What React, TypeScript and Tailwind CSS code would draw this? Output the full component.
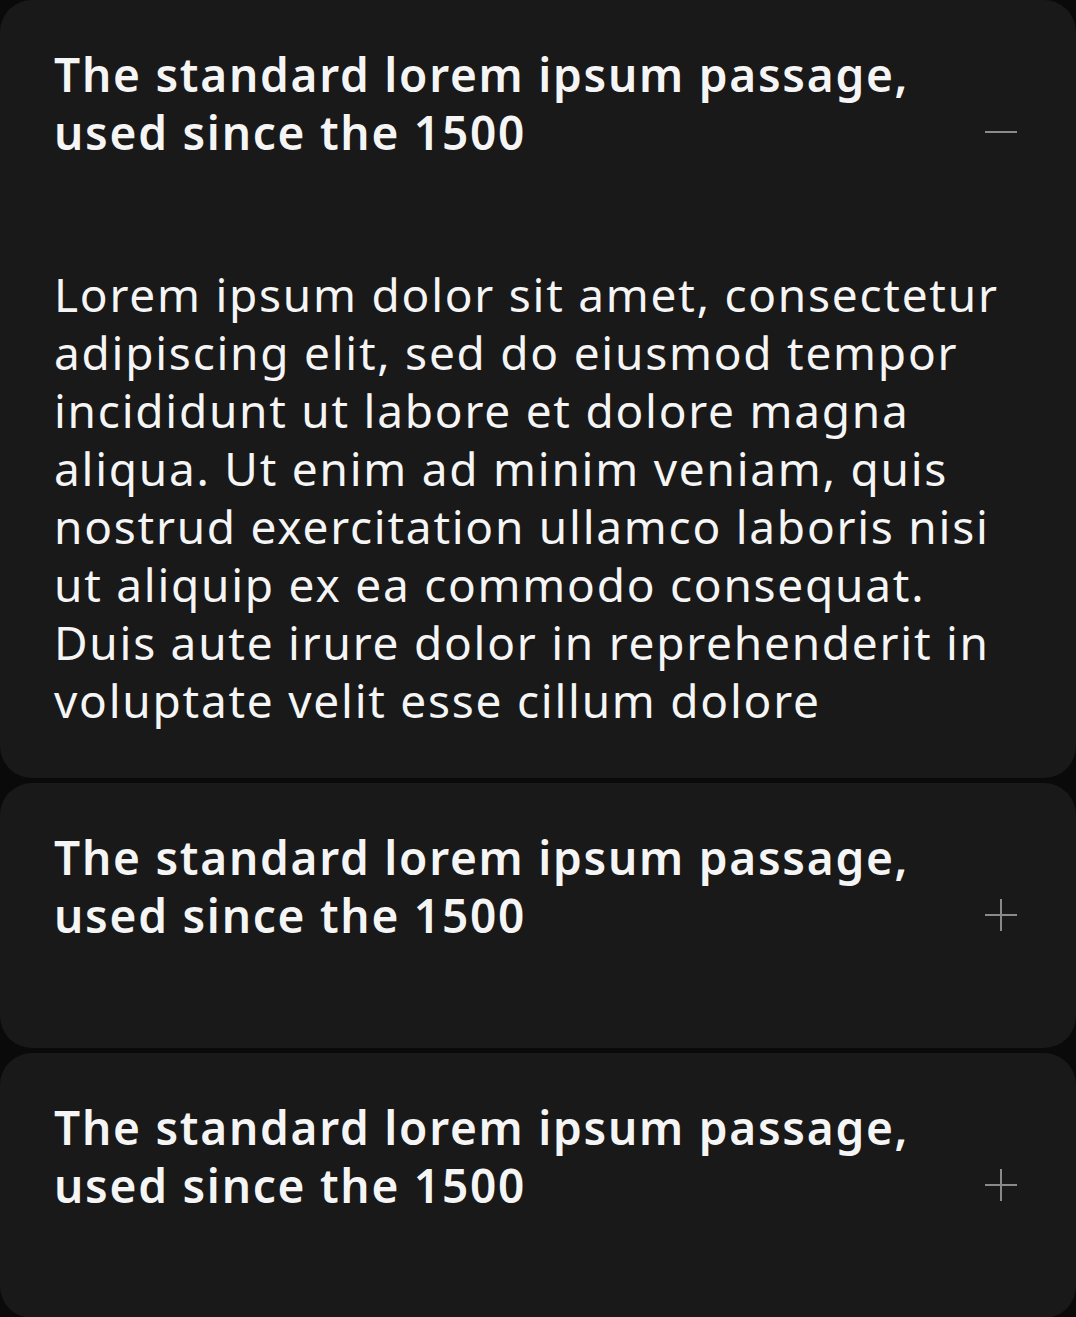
import React from "react";

const body =
  "Lorem ipsum dolor sit amet, consectetur adipiscing elit, sed do eiusmod tempor incididunt ut labore et dolore magna aliqua. Ut enim ad minim veniam, quis nostrud exercitation ullamco laboris nisi ut aliquip ex ea commodo consequat. Duis aute irure dolor in reprehenderit in voluptate velit esse cillum dolore";

function Icon({ open }: { open: boolean }) {
  return (
    <svg width="34" height="34" viewBox="0 0 34 34" className="shrink-0 mb-[12px]">
      <line x1="1" y1="17" x2="33" y2="17" stroke="#8a8a8a" strokeWidth="2" />
      {!open && <line x1="17" y1="1" x2="17" y2="33" stroke="#8a8a8a" strokeWidth="2" />}
    </svg>
  );
}

function Item({ open }: { open: boolean }) {
  return (
    <div className={`bg-[#191919] rounded-[32px] px-[54px] pt-[45px] ${open ? "pb-[49px]" : "pb-[104px]"}`}>
      <div className="flex items-end justify-between">
        <h3 className="text-[46px] leading-[58px] tracking-[1.75px] font-semibold text-[#f5f5f5] w-[880px]">
          The standard lorem ipsum passage, used since the 1500
        </h3>
        <div className="mr-[4px]">
          <Icon open={open} />
        </div>
      </div>
      {open && (
        <p className="mt-[104px] text-[46px] leading-[58px] tracking-[1.75px] text-[#f5f5f5] font-normal">{body}</p>
      )}
    </div>
  );
}

export default function App() {
  return (
    <div
      className="min-h-[1317px] bg-[#0a0a0a] flex flex-col gap-[5px]"
      style={{ fontFamily: '"Noto Sans", sans-serif' }}
    >
      <Item open />
      <Item open={false} />
      <Item open={false} />
    </div>
  );
}
